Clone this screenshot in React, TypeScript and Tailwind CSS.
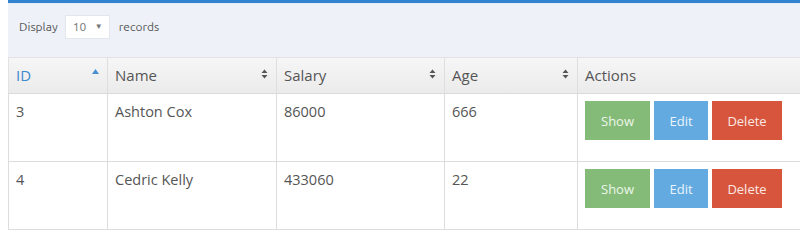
import React from "react";

const cols = [
  { label: "ID", w: "w-[99px]", sort: "asc" },
  { label: "Name", w: "w-[169px]", sort: "both" },
  { label: "Salary", w: "w-[168px]", sort: "both" },
  { label: "Age", w: "w-[133px]", sort: "both" },
  { label: "Actions", w: "w-[240px]", sort: "none" },
];

const rows = [
  { id: "3", name: "Ashton Cox", salary: "86000", age: "666" },
  { id: "4", name: "Cedric Kelly", salary: "433060", age: "22" },
];

function SortIcon({ kind }: { kind: string }) {
  if (kind === "asc")
    return (
      <svg width="7" height="5" viewBox="0 0 7 5" className="mt-[-8px]">
        <path d="M0 5 L3.5 0 L7 5 Z" fill="#4a8fd0" />
      </svg>
    );
  if (kind === "both")
    return (
      <svg width="7" height="10" viewBox="0 0 7 10" className="mt-[-4px]">
        <path d="M0.5 4 L3.5 0.5 L6.5 4 Z M0.5 6 L3.5 9.5 L6.5 6 Z" fill="#555" />
      </svg>
    );
  return null;
}

export default function App() {
  return (
    <div className="w-[800px] h-[232px] overflow-hidden bg-white pl-2" style={{ fontFamily: '"Open Sans", "Liberation Sans", sans-serif' }}>
      <div className="w-[792px]">
        <div className="h-[3px] bg-[#3182d0]" />
        <div className="h-[1px] bg-[#e6ecf4]" />
        <div className="h-[53px] bg-[#eef2f8] flex items-center pl-[11px] pb-[7px] text-[12px] text-[#555]" style={{ fontFamily: 'Ubuntu, "Open Sans", sans-serif' }}>
          <span>Display</span>
          <div className="ml-[7px] w-[45px] h-[24px] bg-white border border-[#e3e6ea] flex items-center justify-between pl-[7px] pr-[6px] text-[#777]">
            <span>10</span>
            <span className="text-[8px] text-[#777]">▼</span>
          </div>
          <span className="ml-[9px]">records</span>
        </div>
        <div className="w-[810px]">
          <div className="flex h-[37px] bg-gradient-to-b from-[#f6f6f6] to-[#ebebeb] border-t border-[#e2e2e2] border-b border-b-[#dadada]">
            {cols.map((c, i) => (
              <div
                key={c.label}
                className={`${c.w} shrink-0 flex items-center justify-between pl-[7px] pr-[8px] text-[15px] ${i === 0 ? "text-[#3c8ad0] border-l border-[#e2e2e2]" : "text-[#555] border-l border-[#dedede]"}`}
              >
                <span>{c.label}</span>
                <SortIcon kind={c.sort} />
              </div>
            ))}
          </div>
          {rows.map((r) => (
            <div key={r.id} className="flex h-[68px] border-b border-[#dddddd] text-[14.5px] text-[#555]">
              <div className="w-[99px] shrink-0 border-l border-[#dddddd] pl-[7px] pt-[7px]">{r.id}</div>
              <div className="w-[169px] shrink-0 border-l border-[#dddddd] pl-[7px] pt-[7px]">{r.name}</div>
              <div className="w-[168px] shrink-0 border-l border-[#dddddd] pl-[7px] pt-[7px]">{r.salary}</div>
              <div className="w-[133px] shrink-0 border-l border-[#dddddd] pl-[7px] pt-[7px]">{r.age}</div>
              <div className="w-[240px] shrink-0 border-l border-[#dddddd] pl-[7px] pt-[7px] flex items-start gap-[4px] text-[13px]">
                <button className="w-[65px] h-[39px] bg-[#84bb78] text-[#eef6ea] pt-[2px]">Show</button>
                <button className="w-[54px] h-[39px] bg-[#62aae0] text-[#eaf4fc] pt-[2px]">Edit</button>
                <button className="w-[70px] h-[39px] bg-[#d6553c] text-[#fbe8e3] pt-[2px]">Delete</button>
              </div>
            </div>
          ))}
        </div>
      </div>
    </div>
  );
}
